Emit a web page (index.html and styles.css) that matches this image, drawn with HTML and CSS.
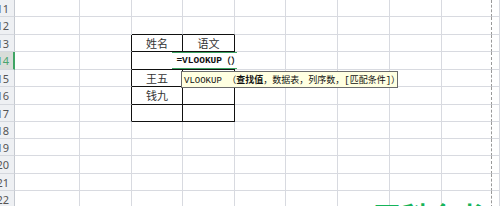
FILE: index.html
```html
<!DOCTYPE html>
<html lang="zh-CN">
<head>
<meta charset="utf-8">
<link rel="stylesheet" href="styles.css">
</head>
<body>
<div class="sheet">
  <div class="rh">11</div><div class="c"></div><div class="c"></div><div class="c"></div><div class="c"></div><div class="c"></div><div class="c"></div><div class="c"></div><div class="c"></div><div class="c pb"></div><div class="c"></div>
  <div class="rh">12</div><div class="c"></div><div class="c"></div><div class="c tb"></div><div class="c tb"></div><div class="c"></div><div class="c"></div><div class="c"></div><div class="c"></div><div class="c pb"></div><div class="c"></div>
  <div class="rh">13</div><div class="c"></div><div class="c tl"></div><div class="c t txt">姓名</div><div class="c t txt">语文</div><div class="c"></div><div class="c"></div><div class="c"></div><div class="c"></div><div class="c pb"></div><div class="c"></div>
  <div class="rh sel">14</div><div class="c"></div><div class="c tl"></div><div class="c t"></div><div class="c t"></div><div class="c"></div><div class="c"></div><div class="c"></div><div class="c"></div><div class="c pb"></div><div class="c"></div>
  <div class="rh">15</div><div class="c"></div><div class="c tl"></div><div class="c t txt">王五</div><div class="c t"></div><div class="c"></div><div class="c"></div><div class="c"></div><div class="c"></div><div class="c pb"></div><div class="c"></div>
  <div class="rh">16</div><div class="c"></div><div class="c tl"></div><div class="c t txt">钱九</div><div class="c t"></div><div class="c"></div><div class="c"></div><div class="c"></div><div class="c"></div><div class="c pb"></div><div class="c"></div>
  <div class="rh">17</div><div class="c"></div><div class="c tl"></div><div class="c t"></div><div class="c t"></div><div class="c"></div><div class="c"></div><div class="c"></div><div class="c"></div><div class="c pb"></div><div class="c"></div>
  <div class="rh">18</div><div class="c"></div><div class="c"></div><div class="c"></div><div class="c"></div><div class="c"></div><div class="c"></div><div class="c"></div><div class="c"></div><div class="c pb"></div><div class="c"></div>
  <div class="rh">19</div><div class="c"></div><div class="c"></div><div class="c"></div><div class="c"></div><div class="c"></div><div class="c"></div><div class="c"></div><div class="c"></div><div class="c pb"></div><div class="c"></div>
  <div class="rh">20</div><div class="c"></div><div class="c"></div><div class="c"></div><div class="c"></div><div class="c"></div><div class="c"></div><div class="c"></div><div class="c"></div><div class="c pb"></div><div class="c"></div>
  <div class="rh">21</div><div class="c"></div><div class="c"></div><div class="c"></div><div class="c"></div><div class="c"></div><div class="c"></div><div class="c"></div><div class="c"></div><div class="c pb"></div><div class="c"></div>
  <div class="rh">22</div><div class="c"></div><div class="c"></div><div class="c"></div><div class="c"></div><div class="c"></div><div class="c"></div><div class="c"></div><div class="c"></div><div class="c pb"></div><div class="c"></div>

  <div class="editor"><span class="fx">=VLOOKUP</span><span class="fxp">（）</span></div>
  <div class="tip"><span class="lat">VLOOKUP </span>（<b>查找值</b>，数据表，列序数，<span class="lat">[</span>匹配条件<span class="lat">]</span>）</div>
  <div class="mark">百科全书</div>
</div>
</body>
</html>
```

FILE: styles.css
```css
html, body {
  margin: 0;
  padding: 0;
  background: #fff;
  overflow: hidden;
}

.sheet {
  position: relative;
  width: 500px;
  height: 206px;
  overflow: hidden;
  display: grid;
  grid-template-columns: 15px 65px 52px 51px 52px 51px 52px 52px 52px 50px 1fr;
  grid-template-rows: 17px 18px 17px 18px 17px 18px 17px 17px 17px 18px 17px 17px;
  font-family: "Noto Sans CJK SC", "Noto Sans", sans-serif;
}

.rh {
  box-sizing: border-box;
  background: #eef0f3;
  border-right: 1px solid #c5c9d0;
  border-bottom: 1px solid #d5d8de;
  font-family: "Noto Sans", "Liberation Sans", sans-serif;
  font-size: 11px;
  color: #555;
  display: flex;
  align-items: center;
  justify-content: flex-end;
  padding-right: 5px;
  overflow: hidden;
  white-space: nowrap;
}

.rh.sel {
  background: #d9ddd9;
  color: #4aa56e;
  border-right: 2px solid #3fa464;
  padding-right: 4px;
}

.c {
  box-sizing: border-box;
  border-right: 1px solid #d8dae0;
  border-bottom: 1px solid #d8dae0;
  background: #fff;
}

.c.pb {
  border-right: 1px dashed #9a9a9a;
}

.c.tb {
  border-bottom-color: #111;
}

.c.tl {
  border-right-color: #111;
}

.c.t {
  border-right-color: #111;
  border-bottom-color: #111;
}

.txt {
  display: flex;
  align-items: center;
  justify-content: center;
  font-size: 11px;
  color: #333;
  line-height: 1;
}

.editor {
  position: absolute;
  left: 172px;
  top: 52px;
  width: 65px;
  height: 17px;
  box-sizing: border-box;
  background: #fff;
  border-top: 1px solid #3fa464;
  border-bottom: 1px solid #3fa464;
  display: flex;
  align-items: center;
  justify-content: flex-end;
  color: #111;
  white-space: nowrap;
}

.fx {
  font-family: "Liberation Mono", monospace;
  font-weight: bold;
  font-size: 9.5px;
}

.fxp {
  font-family: "Noto Sans CJK SC", sans-serif;
  font-weight: bold;
  font-size: 9px;
  margin-right: -3px;
}

.tip {
  position: absolute;
  left: 181px;
  top: 71px;
  width: 217px;
  height: 17px;
  box-sizing: border-box;
  background: #ffffe1;
  border: 1px solid #6b6b6b;
  font-size: 9px;
  line-height: 15px;
  padding-left: 2px;
  color: #111;
  white-space: nowrap;
  overflow: hidden;
}

.tip .lat {
  font-family: "Liberation Mono", monospace;
}

.tip b {
  font-weight: bold;
}

.mark {
  position: absolute;
  left: 374px;
  top: 196px;
  font-size: 26px;
  font-weight: bold;
  color: #16b45a;
  letter-spacing: 2px;
  white-space: nowrap;
}
```
